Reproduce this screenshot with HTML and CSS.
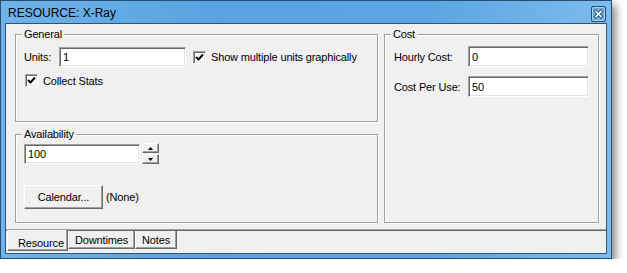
FILE: index.html
```html
<!DOCTYPE html>
<html lang="en">
<head>
  <meta charset="UTF-8" />
  <title>RESOURCE: X-Ray</title>
  <link rel="stylesheet" href="styles.css">
</head>
<body>

  <div class="window">
    <div class="titlebar">
      <span class="title">RESOURCE: X-Ray</span>
      <span class="close">
        <svg width="15" height="16" viewBox="0 0 15 16">
          <rect x="0.5" y="0.5" width="14" height="15" rx="1.5" fill="#4f97d6" stroke="#264f7a"/>
          <rect x="1.5" y="1.5" width="12" height="13" rx="1" fill="#6aaee6" stroke="#a9d0f0"/>
          <path d="M5 5.5 L10 10.5 M10 5.5 L5 10.5" stroke="#2d4f73" stroke-width="3.4" stroke-linecap="square"/>
          <path d="M5 5.5 L10 10.5 M10 5.5 L5 10.5" stroke="#ffffff" stroke-width="1.6" stroke-linecap="square"/>
        </svg>
      </span>
    </div>

    <div class="client">
      <div class="page">
        <div class="col-left">
          <div class="group group-general">
            <span class="group-title">General</span>
            <div class="row">
              <span class="lbl lbl-units">Units:</span>
              <div class="field field-units">1</div>
              <span class="check"><svg width="9" height="9" viewBox="0 0 9 9"><path d="M1 4 L3.5 6.5 L8 1.5" fill="none" stroke="#000" stroke-width="2"/></svg></span>
              <span class="check-text">Show multiple units graphically</span>
            </div>
            <div class="row row-stats">
              <span class="check"><svg width="9" height="9" viewBox="0 0 9 9"><path d="M1 4 L3.5 6.5 L8 1.5" fill="none" stroke="#000" stroke-width="2"/></svg></span>
              <span class="check-text">Collect Stats</span>
            </div>
          </div>

          <div class="group group-avail">
            <span class="group-title">Availability</span>
            <div class="row">
              <div class="field field-avail">100</div>
              <div class="spinner">
                <span class="spin-btn"><svg width="5" height="3" viewBox="0 0 5 3"><path d="M2.5 0 L5 3 L0 3 Z" fill="#000"/></svg></span>
                <span class="spin-btn"><svg width="5" height="3" viewBox="0 0 5 3"><path d="M0 0 L5 0 L2.5 3 Z" fill="#000"/></svg></span>
              </div>
            </div>
            <div class="row row-calendar">
              <button class="btn">Calendar...</button>
              <span class="none">(None)</span>
            </div>
          </div>
        </div>

        <div class="group group-cost">
          <span class="group-title">Cost</span>
          <div class="row">
            <span class="lbl lbl-cost">Hourly Cost:</span>
            <div class="field field-cost">0</div>
          </div>
          <div class="row row-cost2">
            <span class="lbl lbl-cost">Cost Per Use:</span>
            <div class="field field-cost">50</div>
          </div>
        </div>
      </div>

      <div class="tabs">
        <span class="tab tab-active">Resource</span>
        <span class="tab">Downtimes</span>
        <span class="tab">Notes</span>
      </div>
    </div>
  </div>

</body>
</html>
```

FILE: styles.css
```css
* {
  box-sizing: border-box;
}

body {
  margin: 0;
  background: #ffffff;
  font-family: 'Liberation Sans', Arial, sans-serif;
  font-size: 11px;
  letter-spacing: -0.15px;
  color: #000;
}

.window {
  width: 612px;
  height: 259px;
  border: 1px solid #2a4d70;
  background: linear-gradient(to right, #6eb3ea, #58a3e2 35%, #5aa5e3 70%, #7cbcee);
  box-shadow: 4px 5px 8px rgba(0, 0, 0, 0.45);
}

.titlebar {
  height: 22px;
  display: flex;
  align-items: center;
  justify-content: space-between;
  padding: 0 5px 0 7px;
}

.title {
  font-size: 12px;
  letter-spacing: 0;
  color: #000;
  padding-top: 1px;
}

.close {
  display: flex;
  margin-top: 3px;
}

.client {
  margin: 0 4px 4px;
  height: 231px;
  border: 1px solid #2f5478;
  background: #f0f0f0;
  display: flex;
  flex-direction: column;
}

.page {
  height: 206px;
  padding: 10px 7px 0 9px;
  display: flex;
  gap: 6px;
}

.col-left {
  width: 363px;
  display: flex;
  flex-direction: column;
  gap: 12px;
}

.group {
  position: relative;
  border: 1px solid #a0a0a0;
  box-shadow: 1px 1px 0 #ffffff, inset 1px 1px 0 #ffffff;
}

.group-title {
  position: absolute;
  top: -7px;
  left: 6px;
  padding: 0 2px;
  background: #f0f0f0;
  line-height: 13px;
}

.group-general {
  height: 88px;
  padding: 12px 8px 0;
}

.group-avail {
  height: 89px;
  padding: 8px 8px 0;
}

.group-cost {
  width: 215px;
  height: 189px;
  padding: 11px 8px 0 9px;
}

.row {
  display: flex;
  align-items: center;
}

.lbl-units {
  width: 35px;
}

.lbl-cost {
  width: 74px;
}

.field {
  height: 20px;
  background: #ffffff;
  border: 1px solid;
  border-color: #a0a0a0 #ffffff #ffffff #a0a0a0;
  box-shadow: inset 1px 1px 0 #696969, inset -1px -1px 0 #e3e3e3;
  padding: 3px 0 0 3px;
  line-height: 13px;
}

.field-units {
  width: 127px;
  margin-right: 7px;
}

.field-avail {
  width: 116px;
}

.field-cost {
  width: 121px;
  height: 21px;
  padding-top: 4px;
}

.row-cost2 {
  margin-top: 9px;
}

.check {
  width: 13px;
  height: 13px;
  background: #ffffff;
  border: 1px solid;
  border-color: #a0a0a0 #ffffff #ffffff #a0a0a0;
  box-shadow: inset 1px 1px 0 #696969, inset -1px -1px 0 #e3e3e3;
  display: flex;
  align-items: center;
  justify-content: center;
  margin-right: 5px;
}

.row-stats {
  margin-top: 7px;
  padding-left: 1px;
}

.spinner {
  display: flex;
  flex-direction: column;
  gap: 1px;
  margin-left: 2px;
}

.spin-btn {
  width: 17px;
  height: 10px;
  background: #f0f0f0;
  border: 1px solid;
  border-color: #ffffff #696969 #696969 #ffffff;
  box-shadow: inset -1px -1px 0 #a0a0a0;
  display: flex;
  align-items: center;
  justify-content: center;
}

.row-calendar {
  margin-top: 21px;
}

.btn {
  width: 79px;
  height: 24px;
  font-family: inherit;
  font-size: 11px;
  letter-spacing: inherit;
  color: #000;
  background: #f0f0f0;
  border: 1px solid;
  border-color: #ffffff #696969 #696969 #ffffff;
  box-shadow: inset -1px -1px 0 #a0a0a0;
  padding: 0;
  margin-right: 3px;
}

.tabs {
  height: 23px;
  display: flex;
  align-items: flex-start;
  padding-left: 1px;
  border-top: 1px solid #696969;
  box-shadow: 0 -1px 0 #a0a0a0;
}

.tab {
  height: 18px;
  padding: 2px 6px 0;
  border: 1px solid;
  border-top: none;
  border-color: #ffffff #696969 #696969 #ffffff;
  box-shadow: inset -1px -1px 0 #a0a0a0;
  line-height: 14px;
}

.tab-active {
  height: 21px;
  width: 61px;
  margin-top: -1px;
  padding: 6px 0 0 10px;
  background: #f0f0f0;
}
```
